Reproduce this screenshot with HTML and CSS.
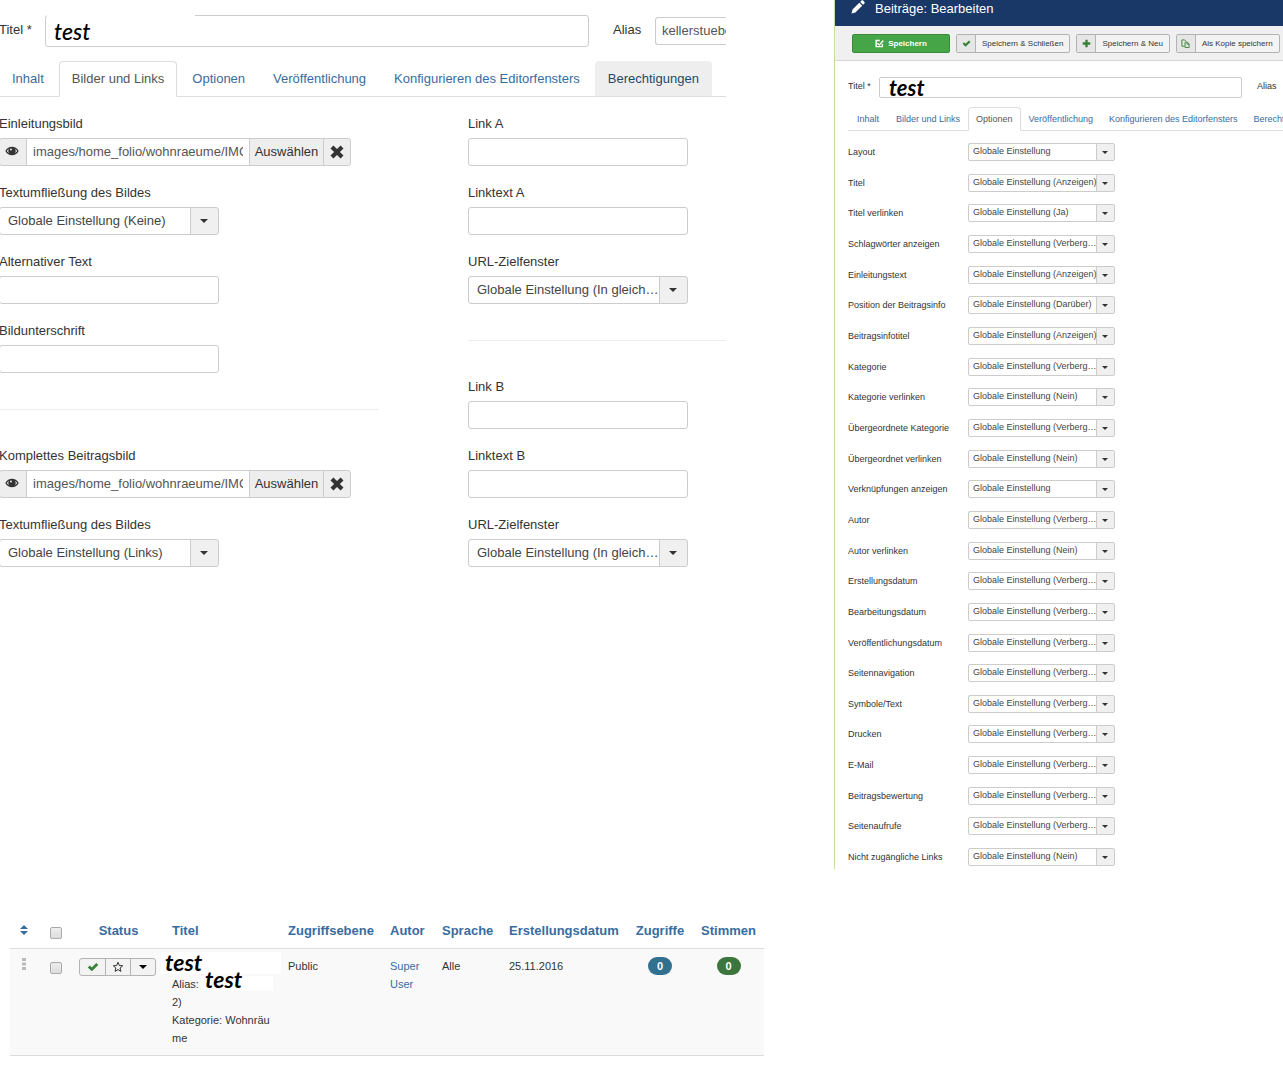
FILE: index.html
```
<!DOCTYPE html>
<html lang="de">
<head>
    <meta charset="UTF-8">
    <meta name="viewport" content="width=device-width, initial-scale=1.0">
    <title>Beiträge: Bearbeiten</title>
    <link rel="stylesheet" href="styles.css">
</head>
<body>
    <!-- Icons -->
    <svg class="sprite" aria-hidden="true">
        <symbol id="eye" viewBox="0 0 14 10">
            <path d="M0.3 5C2 2 4.300.7 7 .7S12 2 13.700 5C12 8 9.700 9.300 7 9.300S2 8 .3 5z"/>
            <path fill="#eee" d="M1.800 5C2.600 3.700 3.500 2.800 4.400 2.400a3.300 3.300 0 0 0 0 5C3.500 6.900 2.600 6.200 1.800 5zM12.200 5c-.8-1.300-1.700-2.200-2.600-2.600a3.300 3.300 0 0 1 0 5c.9-.5 1.800-1.200 2.600-2.400z"/>
            <circle cx="6" cy="3.500" r="1" fill="#eee"/>
        </symbol>
        <symbol id="cross" viewBox="0 0 14 14">
            <path d="M3.400.5 7 4.100 10.600.5l2.900 2.900L9.900 7l3.600 3.600-2.900 2.900L7 9.900l-3.600 3.600-2.900-2.900L4.100 7 .5 3.400z"/>
        </symbol>
        <symbol id="check" viewBox="0 0 12 10">
            <path d="M.8 5.400 2.800 3.400 4.800 5.400 9.300.9l2 2L4.800 9.300z"/>
        </symbol>
        <symbol id="plus" viewBox="0 0 10 10">
            <path d="M3.700.8h2.600v2.900h2.900v2.600H6.300v2.900H3.700V6.300H.8V3.700h2.900z"/>
        </symbol>
        <symbol id="copy" viewBox="0 0 10 10">
            <path fill="none" stroke="currentColor" d="M4 8H1V1h3l1.500 1.500M4.500 3.500H7L9 5.500v4H4.500zM6.800 3.500v2.200H9"/>
        </symbol>
        <symbol id="edit" viewBox="0 0 10 10">
            <path fill="none" stroke="currentColor" stroke-width="1.600" d="M8.200 5.500v3H1.300V1.600h4"/>
            <path d="M3.200 4.200 4.800 5.700 8.500 1.200 9.800 2.500 4.800 7.600 2 5.200z"/>
        </symbol>
        <symbol id="pencil" viewBox="0 0 14 14">
            <path d="M.5 13.500 1.500 9.600 8.300 2.800l2.900 2.900L4.400 12.500zM9.200 1.900 10.500.6c.5-.5 1.100-.5 1.600 0l1.300 1.300c.5.500.5 1.100 0 1.600L12.100 4.800z"/>
        </symbol>
        <symbol id="star" viewBox="0 0 12 12">
            <path fill="none" stroke="currentColor" d="M6 1.300 7.300 4.500l3.400.3-2.600 2.200.8 3.400L6 8.600l-2.900 1.800.8-3.400L1.300 4.800l3.400-.3z"/>
        </symbol>
        <symbol id="down" viewBox="0 0 8 4">
            <path d="M0 0h8L4 4z"/>
        </symbol>
        <symbol id="sort" viewBox="0 0 8 10">
            <path d="M0 4h8L4 0zM0 6h8l-4 4z"/>
        </symbol>
        <symbol id="drag" viewBox="0 0 4 12">
            <path d="M0 0h4v3H0zM0 4.500h4v3H0zM0 9h4v3H0z"/>
        </symbol>
    </svg>

    <div class="page">
        <!-- Bilder und Links -->
        <form class="images-form">
            <div class="title-row">
                <label for="title">Titel *</label>
                <div class="title-field">
                    <input type="text" id="title" name="title" value="test">
                </div>
                <label for="alias" class="alias-label">Alias</label>
                <input type="text" id="alias" name="alias" class="alias-input" value="kellerstuebe">
            </div>

            <ul class="tabs">
                <li><a href="#inhalt">Inhalt</a></li>
                <li class="active"><a href="#bilder">Bilder und Links</a></li>
                <li><a href="#optionen">Optionen</a></li>
                <li><a href="#veroeffentlichung">Veröffentlichung</a></li>
                <li><a href="#editor">Konfigurieren des Editorfensters</a></li>
                <li class="hovered"><a href="#rechte">Berechtigungen</a></li>
            </ul>

            <div class="columns">
                <div class="column">
                    <div class="form-group">
                        <label for="introImage">Einleitungsbild</label>
                        <div class="media">
                            <span class="addon"><svg class="icon-eye"><use href="#eye"/></svg></span>
                            <input type="text" id="introImage" value="images/home_folio/wohnraeume/IMG_0815.jpg">
                            <button type="button" class="choose">Auswählen</button>
                            <button type="button" class="clear" aria-label="Leeren"><svg class="icon-cross"><use href="#cross"/></svg></button>
                        </div>
                    </div>
                    <div class="form-group">
                        <label for="introFloat">Textumfließung des Bildes</label>
                        <div class="select"><select id="introFloat"><option>Globale Einstellung (Keine)</option></select></div>
                    </div>
                    <div class="form-group">
                        <label for="introAlt">Alternativer Text</label>
                        <input type="text" id="introAlt">
                    </div>
                    <div class="form-group">
                        <label for="introCaption">Bildunterschrift</label>
                        <input type="text" id="introCaption">
                    </div>
                    <hr>
                    <div class="form-group">
                        <label for="fullImage">Komplettes Beitragsbild</label>
                        <div class="media">
                            <span class="addon"><svg class="icon-eye"><use href="#eye"/></svg></span>
                            <input type="text" id="fullImage" value="images/home_folio/wohnraeume/IMG_0815.jpg">
                            <button type="button" class="choose">Auswählen</button>
                            <button type="button" class="clear" aria-label="Leeren"><svg class="icon-cross"><use href="#cross"/></svg></button>
                        </div>
                    </div>
                    <div class="form-group">
                        <label for="fullFloat">Textumfließung des Bildes</label>
                        <div class="select"><select id="fullFloat"><option>Globale Einstellung (Links)</option></select></div>
                    </div>
                </div>

                <div class="column">
                    <div class="form-group">
                        <label for="linkA">Link A</label>
                        <input type="text" id="linkA">
                    </div>
                    <div class="form-group">
                        <label for="linkTextA">Linktext A</label>
                        <input type="text" id="linkTextA">
                    </div>
                    <div class="form-group">
                        <label for="targetA">URL-Zielfenster</label>
                        <div class="select"><select id="targetA"><option>Globale Einstellung (In gleich…</option></select></div>
                    </div>
                    <hr>
                    <div class="form-group">
                        <label for="linkB">Link B</label>
                        <input type="text" id="linkB">
                    </div>
                    <div class="form-group">
                        <label for="linkTextB">Linktext B</label>
                        <input type="text" id="linkTextB">
                    </div>
                    <div class="form-group">
                        <label for="targetB">URL-Zielfenster</label>
                        <div class="select"><select id="targetB"><option>Globale Einstellung (In gleich…</option></select></div>
                    </div>
                </div>
            </div>
        </form>

        <!-- Optionen -->
        <form class="options-form">
            <header class="header">
                <svg class="icon-pencil"><use href="#pencil"/></svg>
                <h1>Beiträge: Bearbeiten</h1>
            </header>

            <div class="toolbar">
                <button type="button" class="btn-save"><svg class="icon-tool"><use href="#edit"/></svg>Speichern</button>
                <button type="button" class="btn-tool"><span class="btn-icon"><svg class="icon-tool"><use href="#check"/></svg></span><span class="btn-text">Speichern &amp; Schließen</span></button>
                <button type="button" class="btn-tool"><span class="btn-icon"><svg class="icon-tool"><use href="#plus"/></svg></span><span class="btn-text">Speichern &amp; Neu</span></button>
                <button type="button" class="btn-tool"><span class="btn-icon"><svg class="icon-tool"><use href="#copy"/></svg></span><span class="btn-text">Als Kopie speichern</span></button>
            </div>

            <div class="options-body">
                <div class="title-row-small">
                    <label for="title2">Titel *</label>
                    <input type="text" id="title2" value="test">
                    <span>Alias</span>
                </div>

                <ul class="tabs tabs-small">
                    <li><a href="#inhalt">Inhalt</a></li>
                    <li><a href="#bilder">Bilder und Links</a></li>
                    <li class="active"><a href="#optionen">Optionen</a></li>
                    <li><a href="#veroeffentlichung">Veröffentlichung</a></li>
                    <li><a href="#editor">Konfigurieren des Editorfensters</a></li>
                    <li><a href="#rechte">Berechtigungen</a></li>
                </ul>

                <div class="options">
                    <div class="option"><label for="o1">Layout</label><div class="select"><select id="o1"><option>Globale Einstellung</option></select></div></div>
                    <div class="option"><label for="o2">Titel</label><div class="select"><select id="o2"><option>Globale Einstellung (Anzeigen)</option></select></div></div>
                    <div class="option"><label for="o3">Titel verlinken</label><div class="select"><select id="o3"><option>Globale Einstellung (Ja)</option></select></div></div>
                    <div class="option"><label for="o4">Schlagwörter anzeigen</label><div class="select"><select id="o4"><option>Globale Einstellung (Verberg…</option></select></div></div>
                    <div class="option"><label for="o5">Einleitungstext</label><div class="select"><select id="o5"><option>Globale Einstellung (Anzeigen)</option></select></div></div>
                    <div class="option"><label for="o6">Position der Beitragsinfo</label><div class="select"><select id="o6"><option>Globale Einstellung (Darüber)</option></select></div></div>
                    <div class="option"><label for="o7">Beitragsinfotitel</label><div class="select"><select id="o7"><option>Globale Einstellung (Anzeigen)</option></select></div></div>
                    <div class="option"><label for="o8">Kategorie</label><div class="select"><select id="o8"><option>Globale Einstellung (Verberg…</option></select></div></div>
                    <div class="option"><label for="o9">Kategorie verlinken</label><div class="select"><select id="o9"><option>Globale Einstellung (Nein)</option></select></div></div>
                    <div class="option"><label for="o10">Übergeordnete Kategorie</label><div class="select"><select id="o10"><option>Globale Einstellung (Verberg…</option></select></div></div>
                    <div class="option"><label for="o11">Übergeordnet verlinken</label><div class="select"><select id="o11"><option>Globale Einstellung (Nein)</option></select></div></div>
                    <div class="option"><label for="o12">Verknüpfungen anzeigen</label><div class="select"><select id="o12"><option>Globale Einstellung</option></select></div></div>
                    <div class="option"><label for="o13">Autor</label><div class="select"><select id="o13"><option>Globale Einstellung (Verberg…</option></select></div></div>
                    <div class="option"><label for="o14">Autor verlinken</label><div class="select"><select id="o14"><option>Globale Einstellung (Nein)</option></select></div></div>
                    <div class="option"><label for="o15">Erstellungsdatum</label><div class="select"><select id="o15"><option>Globale Einstellung (Verberg…</option></select></div></div>
                    <div class="option"><label for="o16">Bearbeitungsdatum</label><div class="select"><select id="o16"><option>Globale Einstellung (Verberg…</option></select></div></div>
                    <div class="option"><label for="o17">Veröffentlichungsdatum</label><div class="select"><select id="o17"><option>Globale Einstellung (Verberg…</option></select></div></div>
                    <div class="option"><label for="o18">Seitennavigation</label><div class="select"><select id="o18"><option>Globale Einstellung (Verberg…</option></select></div></div>
                    <div class="option"><label for="o19">Symbole/Text</label><div class="select"><select id="o19"><option>Globale Einstellung (Verberg…</option></select></div></div>
                    <div class="option"><label for="o20">Drucken</label><div class="select"><select id="o20"><option>Globale Einstellung (Verberg…</option></select></div></div>
                    <div class="option"><label for="o21">E-Mail</label><div class="select"><select id="o21"><option>Globale Einstellung (Verberg…</option></select></div></div>
                    <div class="option"><label for="o22">Beitragsbewertung</label><div class="select"><select id="o22"><option>Globale Einstellung (Verberg…</option></select></div></div>
                    <div class="option"><label for="o23">Seitenaufrufe</label><div class="select"><select id="o23"><option>Globale Einstellung (Verberg…</option></select></div></div>
                    <div class="option"><label for="o24">Nicht zugängliche Links</label><div class="select"><select id="o24"><option>Globale Einstellung (Nein)</option></select></div></div>
                </div>
            </div>
        </form>

        <!-- Beitragsliste -->
        <table class="articles">
            <colgroup>
                <col class="c-sort"><col class="c-check"><col class="c-status"><col class="c-title"><col class="c-access">
                <col class="c-author"><col class="c-lang"><col class="c-date"><col class="c-hits"><col class="c-votes">
            </colgroup>
            <thead>
                <tr>
                    <th class="center"><a href="#sort" aria-label="Sortieren"><svg class="icon-sort"><use href="#sort"/></svg></a></th>
                    <th class="center"><input type="checkbox" aria-label="Alle auswählen"></th>
                    <th class="center"><a href="#status">Status</a></th>
                    <th><a href="#titel">Titel</a></th>
                    <th><a href="#zugriffsebene">Zugriffsebene</a></th>
                    <th><a href="#autor">Autor</a></th>
                    <th><a href="#sprache">Sprache</a></th>
                    <th><a href="#datum">Erstellungsdatum</a></th>
                    <th class="center"><a href="#zugriffe">Zugriffe</a></th>
                    <th class="center"><a href="#stimmen">Stimmen</a></th>
                </tr>
            </thead>
            <tbody>
                <tr>
                    <td class="center"><svg class="icon-drag"><use href="#drag"/></svg></td>
                    <td class="center"><input type="checkbox" aria-label="Beitrag auswählen"></td>
                    <td class="center">
                        <div class="btn-group">
                            <button type="button" class="published" aria-label="Veröffentlicht"><svg><use href="#check"/></svg></button>
                            <button type="button" aria-label="Haupteintrag"><svg class="icon-star"><use href="#star"/></svg></button>
                            <button type="button" aria-label="Aktionen"><svg class="icon-down"><use href="#down"/></svg></button>
                        </div>
                    </td>
                    <td class="title-cell">
                        <div class="line"><span class="note note-title">test</span></div>
                        <div class="line">Alias: <span class="note note-alias">test</span></div>
                        <div class="line">2)</div>
                        <div class="category">Kategorie: Wohnräume</div>
                    </td>
                    <td>Public</td>
                    <td><a href="#user">Super User</a></td>
                    <td>Alle</td>
                    <td>25.11.2016</td>
                    <td class="center"><span class="badge">0</span></td>
                    <td class="center"><span class="badge badge-green">0</span></td>
                </tr>
            </tbody>
        </table>
    </div>
</body>
</html>
```
FILE: styles.css
```
* {
    box-sizing: border-box;
}

body {
    font-family: "Liberation Sans", Arial, sans-serif;
    font-size: 13px;
    line-height: 18px;
    color: #333;
    background-color: #fff;
    margin: 0;
}

input, select, button {
    font-family: inherit;
    font-size: inherit;
    line-height: inherit;
    color: inherit;
    margin: 0;
}

a {
    color: #386c9f;
    text-decoration: none;
}

svg {
    display: block;
    fill: currentColor;
}

.sprite {
    position: absolute;
    width: 0;
    height: 0;
}

.page {
    display: grid;
    grid-template-columns: minmax(0, 764fr) minmax(0, 449fr);
    column-gap: 70px;
    row-gap: 45px;
    overflow: hidden;
}

/* Form fields */
label {
    display: block;
}

input[type="text"] {
    display: block;
    width: 220px;
    height: 28px;
    padding: 3px 6px 5px;
    border: 1px solid #ccc;
    border-radius: 3px;
    background-color: #fff;
    color: #555;
}

.select {
    position: relative;
    width: 220px;
}

.select select {
    display: block;
    appearance: none;
    width: 100%;
    height: 28px;
    padding: 0 28px 0 8px;
    border: 1px solid #ccc;
    border-radius: 3px;
    background: linear-gradient(#ccc, #ccc) right 27px top / 1px 100% no-repeat,
                linear-gradient(#f0f0f0, #f0f0f0) right top / 27px 100% no-repeat,
                #fff;
    color: #444;
}

.select::after {
    content: "";
    position: absolute;
    top: 12px;
    right: 11px;
    border: 4px solid transparent;
    border-top-color: #333;
    border-bottom: 0;
}

/* Tabs */
.tabs {
    display: flex;
    gap: 2px;
    list-style: none;
    margin: 14px 0 18px;
    padding: 0;
    border-bottom: 1px solid #ddd;
    white-space: nowrap;
}

.tabs li {
    margin-bottom: -1px;
}

.tabs a {
    display: block;
    padding: 8px 12px;
    border: 1px solid transparent;
    border-radius: 4px 4px 0 0;
}

.tabs .active a {
    color: #555;
    background-color: #fff;
    border-color: #ddd;
    border-bottom-color: #fff;
}

.tabs .hovered a {
    color: #1f496e;
    background-color: #eee;
    border-bottom-color: #ddd;
}

/* Left form */
.images-form {
    margin-left: -1px;
    margin-right: 38px;
    overflow: hidden;
}

.title-row {
    display: flex;
    align-items: center;
    padding-top: 15px;
}

.title-row label {
    flex: 0 0 46px;
    padding-bottom: 3px;
}

.title-row .alias-label {
    flex-basis: 66px;
    padding-left: 24px;
}

.title-field {
    position: relative;
    flex: 1;
}

/* White strip over the upper edge of the field */
.title-field::before {
    content: "";
    position: absolute;
    top: 0;
    left: 2px;
    width: 148px;
    height: 3px;
    background-color: #fff;
}

.title-field input[type="text"] {
    width: 100%;
    height: 32px;
    padding: 0 8px;
    font-family: Lato, Carlito, sans-serif;
    font-size: 23px;
    font-style: italic;
    font-weight: 500;
    color: #000;
}

.title-row .alias-input {
    flex: 0 0 71px;
    width: 71px;
    padding-right: 0;
    border-right: 0;
    border-radius: 3px 0 0 3px;
}

.columns {
    display: grid;
    grid-template-columns: minmax(0, 380fr) minmax(0, 258fr);
    column-gap: 89px;
}

.form-group {
    margin-bottom: 18px;
}

.form-group label {
    margin-bottom: 5px;
}

hr {
    height: 2px;
    margin: 36px 0;
    border: 0;
    border-top: 1px solid #eee;
}

.media {
    display: flex;
    width: 352px;
}

.addon, .media button {
    display: flex;
    align-items: center;
    justify-content: center;
    height: 28px;
    padding: 0;
    border: 1px solid #ccc;
    background-color: #eee;
}

.addon {
    width: 28px;
    padding: 0 3px 3px 0;
    border-radius: 3px 0 0 3px;
}

.media input[type="text"] {
    flex: 1;
    min-width: 0;
    margin-left: -1px;
    border-radius: 0;
}

.media .choose {
    width: 75px;
    margin-left: -1px;
}

.media .clear {
    width: 28px;
    margin-left: -1px;
    border-radius: 0 3px 3px 0;
}

.icon-eye {
    width: 14px;
    height: 10px;
}

.icon-cross {
    width: 14px;
    height: 14px;
}

/* Right form */
.options-form {
    display: flex;
    flex-direction: column;
    min-height: calc(80vh + 2px);
    border-left: 1px solid #c3dfa0;
    font-size: 9px;
    overflow: hidden;
}

.header {
    display: flex;
    align-items: flex-start;
    gap: 10px;
    height: 26px;
    padding-left: 16px;
    background-color: #1a3867;
    color: #fff;
}

.header h1 {
    margin: 0;
    font-size: 13px;
    font-weight: normal;
}

.icon-pencil {
    width: 14px;
    height: 14px;
}

.toolbar {
    display: flex;
    gap: 6px;
    padding: 8px 0 7px 17px;
    background-color: #f0f0f0;
    border-bottom: 1px solid #d8d8d8;
    font-size: 8px;
    white-space: nowrap;
}

.toolbar button {
    display: flex;
    flex: none;
    align-items: center;
    height: 19px;
    padding: 0;
    border: 1px solid #b3b3b3;
    border-radius: 2px;
    background-color: #f3f3f3;
    overflow: hidden;
}

.toolbar .btn-save {
    justify-content: center;
    gap: 4px;
    width: 98px;
    border-color: #3a8a3a;
    background-color: #46a546;
    color: #fff;
    font-weight: bold;
}

.btn-icon {
    display: flex;
    align-items: center;
    justify-content: center;
    width: 19px;
    height: 17px;
    border-right: 1px solid #b3b3b3;
    background-color: #e6e6e6;
    color: #378137;
}

.btn-text {
    padding: 0 6px;
}

.icon-tool {
    width: 9px;
    height: 9px;
}

.options-body {
    display: flex;
    flex: 1;
    flex-direction: column;
    padding: 16px 0 3px 13px;
}

.title-row-small {
    display: flex;
    align-items: center;
}

.title-row-small label {
    flex: 0 0 31px;
    padding-bottom: 3px;
}

.title-row-small span {
    flex: 0 0 41px;
    padding: 0 0 3px 15px;
}

.title-row-small input[type="text"] {
    flex: 1;
    min-width: 0;
    height: 21px;
    padding: 0 9px;
    border-radius: 2px;
    font-family: Lato, Carlito, sans-serif;
    font-size: 22px;
    font-style: italic;
    font-weight: bold;
    color: #000;
}

.tabs-small {
    gap: 0;
    margin: 9px 0 12px;
}

.tabs-small a {
    padding: 2px 7px;
}

.tabs-small li:first-child a {
    padding: 2px 8px;
}

.options {
    display: flex;
    flex: 1;
    flex-direction: column;
    justify-content: space-between;
}

.option {
    display: grid;
    grid-template-columns: 120px 147px;
}

.option .select {
    width: 147px;
}

.option .select select {
    height: 18px;
    padding: 0 16px 2px 4px;
    border-radius: 2px;
    line-height: 14px;
    background: linear-gradient(#ccc, #ccc) right 17px top / 1px 100% no-repeat,
                linear-gradient(#f0f0f0, #f0f0f0) right top / 17px 100% no-repeat,
                #fff;
}

.option .select::after {
    top: 8px;
    right: 7px;
    border-width: 3px 3px 0;
}

/* Article list */
.articles {
    margin-left: 10px;
    width: calc(100% - 10px);
    table-layout: fixed;
    border-collapse: separate;
    border-spacing: 0;
}

.c-sort { width: 28px; }
.c-check { width: 35px; }
.c-status { width: 91px; }
.c-title { width: 116px; }
.c-access { width: 102px; }
.c-author { width: 52px; }
.c-lang { width: 67px; }
.c-date { width: 126px; }
.c-hits { width: 66px; }
.c-votes { width: 71px; }

.articles th, .articles td {
    padding: 8px;
    border-bottom: 1px solid #ddd;
    text-align: left;
    vertical-align: top;
}

.articles th {
    white-space: nowrap;
}

.articles td {
    background-color: #f9f9f9;
    font-size: 11px;
}

.articles .center {
    padding: 8px 0;
    text-align: center;
}

.articles input {
    display: block;
    appearance: none;
    width: 12px;
    height: 12px;
    margin: 5px auto 0;
    border: 1px solid #aaa;
    border-radius: 2px;
    background-image: linear-gradient(#eee, #ddd);
}

.icon-sort {
    width: 8px;
    height: 10px;
    margin: 3px auto 0;
}

.icon-drag {
    width: 4px;
    height: 12px;
    margin: 1px auto 0;
    color: #bbb;
}

.btn-group {
    display: flex;
    justify-content: center;
    padding: 1px 2px 0 0;
}

.btn-group button {
    display: flex;
    align-items: center;
    justify-content: center;
    width: 26px;
    height: 18px;
    padding: 0;
    border: 1px solid #b3b3b3;
    background-color: #f3f3f3;
}

.btn-group button + button {
    margin-left: -1px;
}

.btn-group button:first-child {
    width: 27px;
    border-radius: 3px 0 0 3px;
}

.btn-group button:last-child {
    border-radius: 0 3px 3px 0;
}

.btn-group svg {
    width: 12px;
    height: 10px;
}

.btn-group .icon-star {
    height: 12px;
}

.btn-group .icon-down {
    width: 8px;
    height: 4px;
    color: #000;
}

.btn-group .published {
    color: #378137;
}

.title-cell .line {
    position: relative;
    height: 18px;
}

.category {
    word-break: break-all;
}

/* Handwritten-style notes lying over the cell text */
.note {
    position: absolute;
    background-color: #fff;
    color: #000;
    font-family: Lato, Carlito, sans-serif;
    font-size: 23px;
    font-style: italic;
    font-weight: bold;
}

.note-title {
    top: -5px;
    left: -11px;
    width: 120px;
    height: 22px;
    padding-left: 4px;
    line-height: 20px;
}

.note-alias {
    top: 1px;
    left: 29px;
    width: 72px;
    height: 15px;
    padding-left: 4px;
    line-height: 6px;
}

.badge {
    display: block;
    width: 24px;
    margin: 0 auto;
    border-radius: 9px;
    background-color: #31708f;
    color: #fff;
    font-weight: bold;
    text-align: center;
}

.badge-green {
    background-color: #3c763d;
}
```
